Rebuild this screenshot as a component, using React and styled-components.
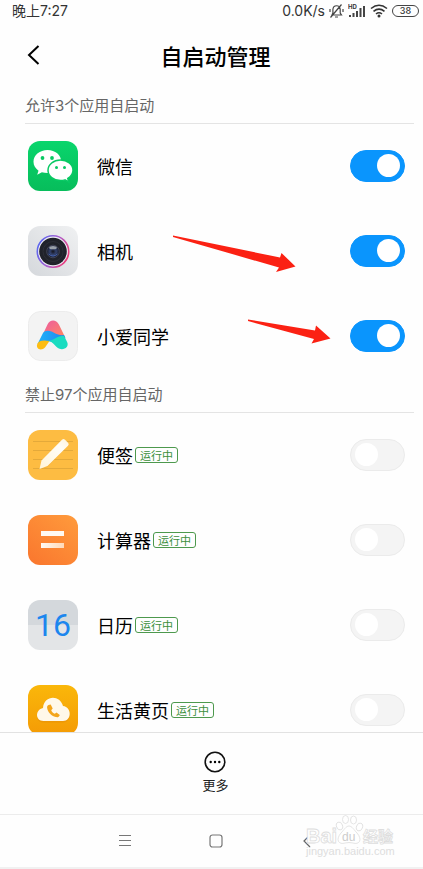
import React from "react";
import styled, { createGlobalStyle } from "styled-components";

const GlobalStyle = createGlobalStyle`
  *, *::before, *::after { box-sizing: border-box; }
  body {
    margin: 0;
    background: #fff;
    color: #000;
    font-family: "Noto Sans CJK SC", "Noto Sans", sans-serif;
  }
  button { border: 0; padding: 0; background: none; color: inherit; font: inherit; cursor: pointer; }
  svg { display: block; flex: none; }
`;

const Page = styled.div`
  position: relative;
  display: flex;
  flex-direction: column;
  height: 100vh;
  overflow: hidden;
  background: #fefefe;
`;

const StatusBar = styled.div`
  display: flex;
  align-items: center;
  justify-content: space-between;
  height: 22px;
  padding: 0 4px 0 12px;
  font-family: Inter, "Noto Sans CJK SC", sans-serif;
  font-size: 14px;
  line-height: 20px;
  color: #333;
`;

const StatusIcons = styled.div`
  display: flex;
  align-items: center;
  gap: 4px;
`;

const Battery = styled.span`
  width: 27px;
  height: 12px;
  border: 1px solid #444;
  border-radius: 6px;
  font-size: 9px;
  font-weight: 500;
  line-height: 10px;
  text-align: center;
`;

const Header = styled.header`
  display: grid;
  grid-template-columns: 24px 1fr 24px;
  align-items: center;
  height: 68px;
  padding: 0 16px 2px 24px;
`;

const Title = styled.h1`
  margin: 0;
  font-size: 22px;
  font-weight: 500;
  line-height: 32px;
  text-align: center;
`;

const Content = styled.main`
  flex: 1;
  min-height: 0;
  overflow-y: auto;
  scrollbar-width: none;
`;

const SectionTitle = styled.h2`
  height: 34px;
  margin: 0 9px 0 25px;
  border-bottom: 1px solid #e4e4e4;
  font-family: Inter, "Noto Sans CJK SC", sans-serif;
  font-size: 15px;
  font-weight: 400;
  line-height: 32px;
  color: #666;
`;

const List = styled.ul`
  margin: 0;
  padding: 0;
  list-style: none;
`;

const Row = styled.li`
  display: flex;
  align-items: center;
  height: 85px;
  padding: 0 18px 2px 28px;
`;

const Name = styled.label`
  margin-left: 19px;
  font-size: 18px;
  line-height: 28px;
`;

const Badge = styled.span`
  margin-left: 2px;
  padding: 0 4px;
  border: 1px solid #4d994d;
  border-radius: 3px;
  font-size: 11px;
  line-height: 14px;
  color: #3c8f3c;
`;

const Switch = styled.input`
  appearance: none;
  display: flex;
  align-items: center;
  width: 55px;
  height: 32px;
  margin: 0 0 0 auto;
  padding: 0 4px;
  border: 1px solid #ebebeb;
  border-radius: 16px;
  background: #f4f4f4;
  cursor: pointer;

  &::before {
    content: "";
    width: 23px;
    height: 23px;
    border-radius: 50%;
    background: #fff;
  }

  &:checked {
    justify-content: flex-end;
    border-color: #0a95fd;
    background: #0a95fd;
  }
`;

const Actions = styled.footer`
  display: flex;
  justify-content: center;
  height: 82px;
  padding-left: 8px;
  border-top: 1px solid #e2e2e2;
`;

const MoreButton = styled.button`
  display: flex;
  flex-direction: column;
  align-items: center;
  gap: 2px;
  padding-top: 17px;
  font-size: 13px;
  line-height: 18px;
  color: #222;
`;

const NavBar = styled.nav`
  display: flex;
  align-items: center;
  justify-content: center;
  gap: 71px;
  height: 55px;
  padding-left: 8px;
  border-top: 1px solid #ececec;
  border-bottom: 2px solid #f1f1f1;
`;

const Arrows = styled.svg`
  position: absolute;
  top: 230px;
  left: 170px;
  pointer-events: none;
`;

const Watermark = styled.svg`
  position: absolute;
  right: 25px;
  bottom: 8px;
  pointer-events: none;
`;

const WechatIcon = () => (
  <svg width="50" height="50" viewBox="0 0 50 50" aria-hidden="true">
    <defs>
      <linearGradient id="wechat" x2="0" y2="1">
        <stop stopColor="#09d56c" />
        <stop offset="1" stopColor="#07bd5b" />
      </linearGradient>
    </defs>
    <rect width="50" height="50" rx="12" fill="url(#wechat)" />
    <path d="M19.500 9C12 9 5.500 14 5.500 20.800c0 3.700 1.900 6.700 5 8.900l-1.300 4 4.700-2.400c1.800.5 3.600.8 5.600.8 7.700 0 13.700-5.200 13.700-11.600S27.200 9 19.500 9z" fill="#fff" />
    <path d="M32.500 19c-6.900 0-12.500 4.600-12.500 10.300s5.600 10.300 12.500 10.300c1.600 0 3.100-.2 4.500-.7l3.900 2.200-1.100-3.600c3.200-1.900 5.200-4.900 5.200-8.200C45 23.600 39.400 19 32.500 19z" fill="#fff" stroke="#08c963" strokeWidth="1.500" />
    <g fill="#08c963">
      <circle cx="14.500" cy="17" r="1.900" /><circle cx="24" cy="17" r="1.900" />
      <circle cx="28.500" cy="26.500" r="1.500" /><circle cx="36.500" cy="26.500" r="1.500" />
    </g>
  </svg>
);

const CameraIcon = () => (
  <svg width="50" height="50" viewBox="0 0 50 50" aria-hidden="true">
    <defs>
      <linearGradient id="camera" x1="1" x2="0" y2="1">
        <stop stopColor="#f0f1f2" /><stop offset="1" stopColor="#d5d8dc" />
      </linearGradient>
      <linearGradient id="ring" y1=".3" x2="1" y2=".7">
        <stop stopColor="#5968ef" /><stop offset=".5" stopColor="#aa61cf" /><stop offset="1" stopColor="#ef3c75" />
      </linearGradient>
      <radialGradient id="lens">
        <stop stopColor="#15151c" /><stop offset=".5" stopColor="#33426f" /><stop offset="1" stopColor="#171a27" />
      </radialGradient>
    </defs>
    <rect width="50" height="50" rx="12" fill="url(#camera)" />
    <circle cx="25" cy="25.500" r="15.700" fill="#eeedf5" stroke="url(#ring)" strokeWidth="1.600" />
    <circle cx="25" cy="25.500" r="13.800" fill="#20222a" />
    <circle cx="25" cy="25.500" r="10" fill="none" stroke="#2c2e37" />
    <circle cx="25" cy="25.500" r="6.300" fill="url(#lens)" stroke="#4a4d62" strokeWidth=".8" />
    <ellipse cx="25" cy="21.700" rx="3.800" ry="1.600" fill="#9aa0aa" />
    <path d="M20.500 28q4.500 4 9 0" fill="none" stroke="#4664b3" />
  </svg>
);

const AssistantIcon = () => (
  <svg width="50" height="50" viewBox="0 0 50 50" aria-hidden="true">
    <defs>
      <linearGradient id="pink" x2="1" y2="1">
        <stop stopColor="#ed5ba1" /><stop offset="1" stopColor="#ff885d" />
      </linearGradient>
      <linearGradient id="blue" x2="1">
        <stop stopColor="#21b2fa" /><stop offset="1" stopColor="#1c86ed" />
      </linearGradient>
    </defs>
    <rect x=".5" y=".5" width="49" height="49" rx="12" fill="#f3f3f3" stroke="#ececec" />
    <path d="M15.500 22l4-8.500c2.400-5.400 8.700-5.400 11.400 0L37 26z" fill="url(#pink)" />
    <path d="M9.500 33l5.500-11c2.300-3.300 7.200-2.600 10.500-.5 4.500 2.800 8 2.800 10.500 2.500l1.500 3-12 5c-3-2-5-2.500-8-.5z" fill="url(#blue)" />
    <path d="M9.500 32.500c1.500-3 5.500-3.700 12-2.500l-4.300 6.200c-4 4.500-10.200 1.500-7.700-3.700z" fill="#fdbd13" />
    <path d="M19.500 30c6.500-.3 9.500-5.500 16.500-5.300l3 6c3 5.600-4.500 10-9.800 5.800-3-2.500-4.400-6.300-9.700-6.500z" fill="#19dcc0" />
  </svg>
);

const NotesIcon = () => (
  <svg width="50" height="50" viewBox="0 0 50 50" aria-hidden="true">
    <defs>
      <linearGradient id="pencil" x1="1" x2="0" y2="1">
        <stop stopColor="#fff5dc" /><stop offset=".3" stopColor="#fffdf8" /><stop offset="1" stopColor="#fff4d8" />
      </linearGradient>
    </defs>
    <rect width="50" height="50" rx="12" fill="#fdbc42" />
    <path d="M5 11.500h40M5 20.500h40M5 29.500h40M5 38.500h40" stroke="#dda439" strokeWidth=".8" />
    <path d="M15 38l23-21 3-2.500-22 23z" fill="#eea52c" opacity=".4" />
    <path d="M11.500 39l2-8.500L34 9.700q1.500-1.400 3 0l3 3q1.500 1.500 0 3L19.500 36z" fill="url(#pencil)" />
  </svg>
);

const CalculatorIcon = () => (
  <svg width="50" height="50" viewBox="0 0 50 50" aria-hidden="true">
    <defs>
      <linearGradient id="calculator" x1="1" x2=".2" y2="1">
        <stop stopColor="#ff9b3c" /><stop offset="1" stopColor="#fa792f" />
      </linearGradient>
      <linearGradient id="bar" x2="1">
        <stop stopColor="#fffaf3" /><stop offset="1" stopColor="#ffd9b8" />
      </linearGradient>
    </defs>
    <rect width="50" height="50" rx="12" fill="url(#calculator)" />
    <path d="M13 16h23v5H13z" fill="#fffaf3" />
    <path d="M13 28h23v5H13z" fill="url(#bar)" />
  </svg>
);

const CalendarTile = styled.div`
  flex: none;
  width: 50px;
  height: 50px;
  border-radius: 12px;
  background: linear-gradient(#d4d8dc 50%, #e3e5e7 50%);
  color: #1c86ee;
  font-family: Roboto, sans-serif;
  font-size: 32px;
  font-weight: 400;
  line-height: 50px;
  text-align: center;
`;

const CalendarIcon = () => <CalendarTile aria-hidden="true">16</CalendarTile>;

const YellowPagesIcon = () => (
  <svg width="50" height="50" viewBox="0 0 50 50" aria-hidden="true">
    <defs>
      <linearGradient id="yellow" x2="0" y2="1">
        <stop stopColor="#fab70a" /><stop offset="1" stopColor="#f49b05" />
      </linearGradient>
    </defs>
    <rect width="50" height="50" rx="12" fill="url(#yellow)" />
    <path d="M15.500 37.500c-8.500 0-8.500-11.500-.5-12.500C15 11 32 10 35 22.500c9 .5 9 15 0 15z" fill="#e58e05" opacity=".5" />
    <path d="M15.500 36c-8.500 0-8.500-11.500-.5-13C16 10 32 9.500 35 21c9 1 9 15 0 15z" fill="#fff8e9" />
    <path d="M20.500 20l2.200-.5 2 4-1.500 1.800c.7 1.700 2 2.900 3.600 3.500l1.700-1.300 3.300 2.400c-.6 2-2.200 2.700-4 2.200-4.700-1.300-8.200-5.200-8.700-9.400-.1-1.200.4-2.200 1.400-2.700z" fill="#f3a51b" />
  </svg>
);

const MuteIcon = () => (
  <svg width="15" height="16" viewBox="0 0 15 16" fill="none" stroke="#444" strokeWidth="1.200" aria-label="静音">
    <path d="M3 12h9.500l-1.300-2V6.500c0-5-7-5-7.300 0V10L3 12zM6 14h3M12.500 1.500l-11 13M1 6v3M14 6v3" />
  </svg>
);

const SignalIcon = () => (
  <svg width="18" height="16" viewBox="0 0 18 16" aria-label="HD">
    <text x="0" y="6" fontFamily="Inter, sans-serif" fontSize="6" fontWeight="700" fill="#333">HD</text>
    <path d="M1 12h2v2H1zM4.500 10h2v4h-2zM8 8h2v6H8zM11.500 5h2v9h-2zM15 3h2v11h-2z" fill="#444" />
  </svg>
);

const WifiIcon = () => (
  <svg width="18" height="14" viewBox="0 0 18 14" fill="none" stroke="#333" strokeWidth="1.600" aria-label="Wi-Fi">
    <path d="M1 4.500q8-6.500 16 0M3.500 7.300q5.500-4.500 11 0M6 10q3-2.500 6 0" />
    <circle cx="9" cy="12" r=".7" fill="#333" />
  </svg>
);

const sections = [
  {
    title: "允许3个应用自启动",
    apps: [
      { id: "wechat", name: "微信", Icon: WechatIcon, enabled: true },
      { id: "camera-app", name: "相机", Icon: CameraIcon, enabled: true },
      { id: "assistant", name: "小爱同学", Icon: AssistantIcon, enabled: true },
    ],
  },
  {
    title: "禁止97个应用自启动",
    apps: [
      { id: "notes", name: "便签", Icon: NotesIcon, running: true },
      { id: "calc", name: "计算器", Icon: CalculatorIcon, running: true },
      { id: "calendar", name: "日历", Icon: CalendarIcon, running: true },
      { id: "pages", name: "生活黄页", Icon: YellowPagesIcon, running: true },
    ],
  },
];

const AppRow = ({ id, name, Icon, enabled = false, running = false }) => (
  <Row>
    <Icon />
    <Name htmlFor={`switch-${id}`}>{name}</Name>
    {running && <Badge>运行中</Badge>}
    <Switch id={`switch-${id}`} type="checkbox" role="switch" defaultChecked={enabled} />
  </Row>
);

export default function App() {
  return (
    <>
      <GlobalStyle />
      <Page>
        <StatusBar>
          <span>晚上7:27</span>
          <StatusIcons>
            <span>0.0K/s</span>
            <MuteIcon />
            <SignalIcon />
            <WifiIcon />
            <Battery>38</Battery>
          </StatusIcons>
        </StatusBar>

        <Header>
          <button type="button" aria-label="返回">
            <svg width="20" height="24" viewBox="0 0 20 24" fill="none" stroke="#000" strokeWidth="2">
              <path d="M14.500 3L5 12l9.500 9" />
            </svg>
          </button>
          <Title>自启动管理</Title>
        </Header>

        <Content>
          {sections.map(({ title, apps }) => (
            <section key={title}>
              <SectionTitle>{title}</SectionTitle>
              <List>
                {apps.map((app) => <AppRow key={app.id} {...app} />)}
              </List>
            </section>
          ))}
        </Content>

        <Actions>
          <MoreButton type="button">
            <svg width="24" height="24" viewBox="0 0 24 24" aria-hidden="true">
              <circle cx="12" cy="12" r="9.800" fill="none" stroke="#111" strokeWidth="1.600" />
              <circle cx="7.700" cy="12" r="1.200" /><circle cx="12" cy="12" r="1.200" /><circle cx="16.300" cy="12" r="1.200" />
            </svg>
            更多
          </MoreButton>
        </Actions>

        <NavBar>
          <button type="button" aria-label="最近任务">
            <svg width="20" height="20" viewBox="0 0 20 20" stroke="#777">
              <path d="M4 4.500h12M4 9.500h12M4 14.500h12" />
            </svg>
          </button>
          <button type="button" aria-label="主页">
            <svg width="20" height="20" viewBox="0 0 20 20" fill="none" stroke="#777" strokeWidth="1.200">
              <rect x="4" y="4" width="12" height="12" rx="2.500" />
            </svg>
          </button>
          <button type="button" aria-label="后退">
            <svg width="20" height="20" viewBox="0 0 20 20" fill="none" stroke="#666" strokeWidth="1.200">
              <path d="M13 4L7 10l6 6" />
            </svg>
          </button>
        </NavBar>

        <Arrows width="165" height="120" viewBox="170 230 165 120" fill="#fb2113" aria-hidden="true">
          <path d="M173 235.500L280 257.500L281.500 253L295.500 266.500L276 272L279 267.500L173 237z" />
          <path d="M248 319.500L315 330.500L316 325.500L330.500 338.500L311.500 343.500L314 339L248 321z" />
        </Arrows>

        <Watermark width="94" height="48" viewBox="304 813 94 48" aria-label="Baidu 经验">
          <g fill="#fff" stroke="#ddd" strokeWidth=".8">
            <text x="306" y="843" fontFamily="Liberation Sans, sans-serif" fontSize="20" fontWeight="700">Bai</text>
            <path d="M349 826c-3 0-5 4-8 7-6 7-2 12 4 10q4-1 8 0c6 2 10-3 4-10-3-3-5-7-8-7z" />
            <ellipse cx="339.500" cy="826" rx="3" ry="4" transform="rotate(-20 339.500 826)" />
            <ellipse cx="345.500" cy="819.500" rx="3" ry="4" />
            <ellipse cx="353.500" cy="820" rx="3" ry="4" />
            <ellipse cx="359.500" cy="827" rx="3" ry="4" transform="rotate(20 359.500 827)" />
            <text x="363" y="842" fontFamily="Noto Sans CJK SC, sans-serif" fontSize="15" fontWeight="700">经验</text>
          </g>
          <text x="342" y="841" fontFamily="Liberation Sans, sans-serif" fontSize="12" fill="#ccc">du</text>
          <text x="306" y="855" fontFamily="Liberation Sans, sans-serif" fontSize="11" fill="#ddd">jingyan.baidu.com</text>
        </Watermark>
      </Page>
    </>
  );
}
